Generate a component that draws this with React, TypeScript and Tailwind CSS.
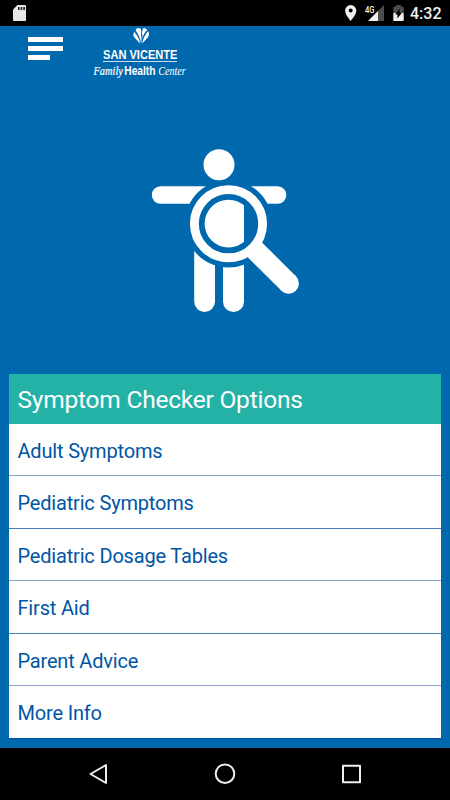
const options = [
  { label: "Adult Symptoms", height: "h-[52px]", border: "border-[#8f9fcb]" },
  { label: "Pediatric Symptoms", height: "h-[53px]", border: "border-[#4a7ab3]" },
  { label: "Pediatric Dosage Tables", height: "h-[52px]", border: "border-[#8f9fcb]" },
  { label: "First Aid", height: "h-[53px]", border: "border-[#4a7ab3]" },
  { label: "Parent Advice", height: "h-[52px]", border: "border-[#8f9fcb]" },
  { label: "More Info", height: "h-[53px]", border: "border-[#004b9b]" },
];

function StatusBar() {
  return (
    <div className="flex h-[26px] shrink-0 items-center bg-black pl-[13px] pr-[9px]">
      <svg width="13" height="16" viewBox="0 0 13 16">
        <path d="M4.5 0H12a1 1 0 0 1 1 1v14a1 1 0 0 1-1 1H1a1 1 0 0 1-1-1V4.5z" fill="#e6e6e6" />
        <path d="M5 2h1.6v3H5zM7.7 2h1.6v3H7.7zM10.3 2h1.6v3h-1.6z" fill="#222" />
      </svg>
      <svg width="12" height="16" viewBox="0 0 12 16" className="ml-auto">
        <path
          d="M5.7 0A5.6 5.6 0 0 0 .1 5.6C.1 9.8 5.7 16 5.7 16s5.6-6.2 5.6-10.4A5.6 5.6 0 0 0 5.7 0zm0 7.6a2 2 0 1 1 0-4 2 2 0 0 1 0 4z"
          fill="#f2f2f2"
        />
      </svg>
      <svg width="20" height="18" viewBox="0 0 20 18" className="ml-[8px]">
        <path d="M19 1v16H3z" fill="#4d4d4d" />
        <path d="M13 7v10H3z" fill="#f2f2f2" />
        <path d="M0 0h10v9H0z" fill="#000" />
        <text x="0" y="8.5" fontSize="9.5" textLength="9.5" lengthAdjust="spacingAndGlyphs" fill="#f2f2f2" className="font-[Roboto,sans-serif] font-medium">
          4G
        </text>
      </svg>
      <svg width="11" height="16" viewBox="0 0 11 16" className="ml-[8px]">
        <path d="M3 0h5v1.8h2q.7 0 .7.7V8H.3V2.5q0-.7.7-.7h2z" fill="#4d4d4d" />
        <path d="M.3 8h10.4v7.3q0 .7-.7.7H1q-.7 0-.7-.7z" fill="#f2f2f2" />
        <path d="M6.6 3.8v4.200h2.200L4.400 13.500V9.500H2.200z" fill="#000" />
      </svg>
      <span className="ml-[6px] mt-[2px] w-[31px] whitespace-nowrap text-[16px] font-medium leading-5 text-[#f2f2f2]">4:32</span>
    </div>
  );
}

function Logo() {
  return (
    <svg width="104" height="54" viewBox="0 0 104 54" fill="#fff" className="ml-[28px]">
      <path d="M44.5 4Q45.5 2 48 2.1Q50.5 2.6 50.2 5.5Q49.6 8.5 50.5 12Q50.8 15 50.2 17.5Q49.5 11.5 44.5 4z" />
      <path d="M43.3 6Q41.2 9 43.5 11.5L49 17.5Q48.3 11.5 43.3 6z" />
      <path d="M51.8 2.6Q54.5 1.3 56.3 4Q52.3 7.5 51.7 12Q50.3 6.5 51.8 2.6z" />
      <path d="M57.2 5.3Q59.2 8.5 56.7 11.5L51.3 17.5Q52.2 10.5 57.2 5.3z" />
      <text x="12" y="33" fontSize="12" textLength="74.5" lengthAdjust="spacingAndGlyphs" className="font-['Liberation_Sans',sans-serif] font-bold">
        SAN VICENTE
      </text>
      <rect x="12" y="35.1" width="74" height="0.8" />
      <text x="2.5" y="48.5" fontSize="11.5" textLength="29.5" lengthAdjust="spacingAndGlyphs" stroke="#fff" strokeWidth="0.2" className="font-['Liberation_Serif',serif] italic">
        Family
      </text>
      <text x="33.3" y="48.5" fontSize="12" textLength="31.2" lengthAdjust="spacingAndGlyphs" className="font-['Liberation_Sans',sans-serif] font-bold">
        Health
      </text>
      <text x="67.2" y="48.5" fontSize="11.5" textLength="27.5" lengthAdjust="spacingAndGlyphs" className="font-['Liberation_Serif',serif] italic">
        Center
      </text>
    </svg>
  );
}

function SymptomIcon() {
  return (
    <svg width="170" height="180" viewBox="140 140 170 180" fill="#fff">
      <defs>
        <mask id="lens" maskUnits="userSpaceOnUse" x="140" y="140" width="170" height="180">
          <rect x="140" y="140" width="170" height="180" fill="#fff" />
          <circle cx="228.5" cy="223.7" r="43.8" fill="#000" />
          <circle cx="228.5" cy="223.7" r="23.9" fill="#fff" />
        </mask>
      </defs>
      <circle cx="219" cy="164.7" r="15.5" />
      <g mask="url(#lens)">
        <rect x="151.8" y="186.3" width="134.5" height="17.4" rx="8.7" />
        {/* torso seen through the lens */}
        <rect x="200" y="195" width="44" height="55" />
        <path d="M194.2 240h20.8v61.6a10.4 10.4 0 0 1-20.8 0z" />
        <path d="M223 240h21v61.5a10.5 10.5 0 0 1-21 0z" />
      </g>
      <circle cx="228.5" cy="223.7" r="34.1" fill="none" stroke="#fff" strokeWidth="8.9" />
      <path d="M253 248 288.5 283.3" stroke="#fff" strokeWidth="20.5" />
      <circle cx="288.6" cy="283.4" r="10.3" />
    </svg>
  );
}

function NavBar() {
  return (
    <div className="flex h-[52px] shrink-0 justify-center bg-black">
      <svg width="280" height="52" viewBox="0 0 280 52" fill="none" stroke="#f0f0f0" strokeWidth="2" strokeLinejoin="round">
        <path d="M21 17v18L5.5 26z" />
        <circle cx="140" cy="25.7" r="9.3" />
        <rect x="258" y="17.7" width="17" height="16.5" />
      </svg>
    </div>
  );
}

export default function App() {
  return (
    <div className="flex h-[800px] w-[450px] flex-col bg-[#0069ad] font-[Roboto,sans-serif]">
      <StatusBar />
      <div className="flex h-[54px] items-start pl-[28px]">
        <div className="mt-[11px] flex w-[35px] flex-col gap-[4.5px]">
          <div className="h-[4.5px] bg-white" />
          <div className="h-[4.5px] bg-white" />
          <div className="h-[4.5px] w-[22px] bg-white" />
        </div>
        <Logo />
      </div>
      <div className="flex h-[294px] justify-center pt-[60px]">
        <SymptomIcon />
      </div>
      <div className="ml-[9px] w-[432px]">
        <h1 className="flex h-[50px] items-center bg-[#24b1a6] pl-[8.5px] pt-[2px] text-[24.5px] tracking-[-0.22px] text-white">
          Symptom Checker Options
        </h1>
        <ul>
          {options.map((option) => (
            <li
              key={option.label}
              className={`${option.height} ${option.border} flex items-center border-b bg-white pl-[8.5px] pt-[2px] text-[20px] tracking-[-0.18px] text-[#0055a5]`}
            >
              {option.label}
            </li>
          ))}
        </ul>
      </div>
      <div className="grow" />
      <NavBar />
    </div>
  );
}
